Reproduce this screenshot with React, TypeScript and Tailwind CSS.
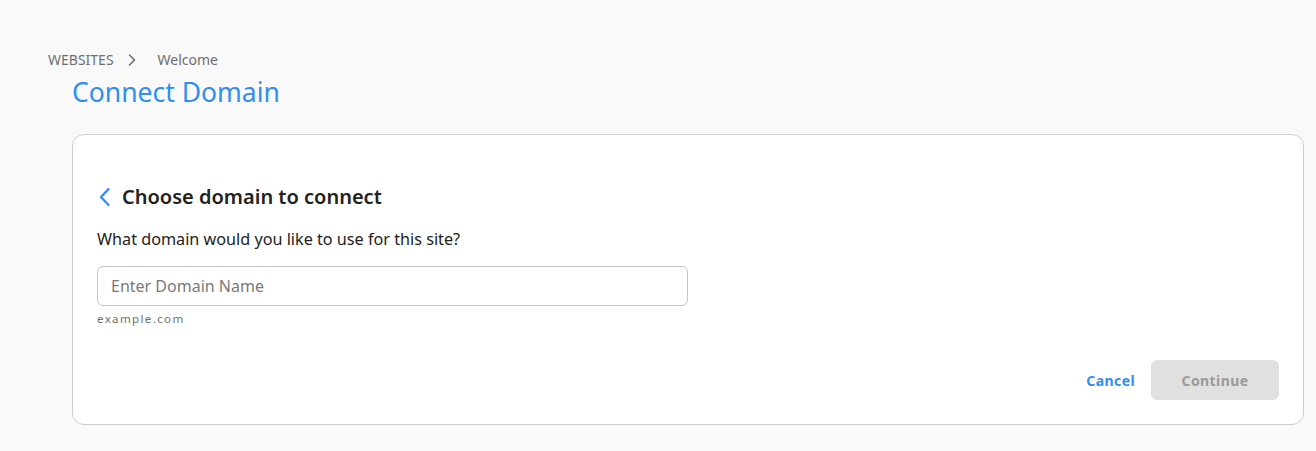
import React from "react";

export default function App() {
  return (
    <div
      className="w-[1316px] h-[451px] bg-[#f9f9f9] overflow-hidden"
      style={{ fontFamily: '"Noto Sans", "Open Sans", sans-serif' }}
    >
      {/* breadcrumb */}
      <div className="pl-[48px] pt-[50px] flex items-center text-[14px] text-[#6f6f6f] leading-[20px]">
        <span>WEBSITES</span>
        <svg className="ml-[13px] mr-[21px]" width="10" height="14" viewBox="0 0 10 14" fill="none">
          <path d="M2.5 2 L7.5 7 L2.5 12" stroke="#6f6f6f" strokeWidth="1.6" strokeLinecap="round" strokeLinejoin="round" />
        </svg>
        <span>Welcome</span>
      </div>
      <h1 className="pl-[72px] mt-[4px] text-[26.5px] leading-[36px] text-[#2f8ff0] font-normal">Connect Domain</h1>

      {/* card */}
      <div className="ml-[72px] mt-[24px] w-[1232px] h-[291px] bg-white border border-[#cfcfcf] rounded-[12px] px-[24px] pt-[48px] flex flex-col">
        <div className="flex items-center">
          <svg width="14" height="22" viewBox="0 0 14 22" fill="none" className="ml-[1px]">
            <path d="M10.5 3 L3 11 L10.5 19" stroke="#2f8ff0" strokeWidth="2.3" strokeLinecap="round" strokeLinejoin="round" />
          </svg>
          <h2 className="ml-[10px] text-[20px] leading-[28px] font-semibold text-[#222]">Choose domain to connect</h2>
        </div>
        <p className="mt-[17px] text-[16.2px] leading-[22px] text-[#222]">What domain would you like to use for this site?</p>
        <input
          className="mt-[16px] w-[591px] h-[40px] border border-[#c6c6c6] rounded-[6px] px-[13px] text-[16px] text-[#333] placeholder:text-[#7a7a7a] outline-none bg-white"
          placeholder="Enter Domain Name"
        />
        <div className="mt-[5px] text-[11.5px] leading-[16px] tracking-[0.12em] text-[#6f6f6f]">example.com</div>
        <div className="mt-auto mb-[24px] flex items-center justify-end">
          <button className="text-[14px] font-bold text-[#2f8ff0] tracking-[0.03em] mr-[16px]">Cancel</button>
          <button className="w-[128px] h-[40px] rounded-[6px] bg-[#e0e0e0] text-[14px] font-bold text-[#9a9a9a] tracking-[0.03em]">Continue</button>
        </div>
      </div>
    </div>
  );
}
